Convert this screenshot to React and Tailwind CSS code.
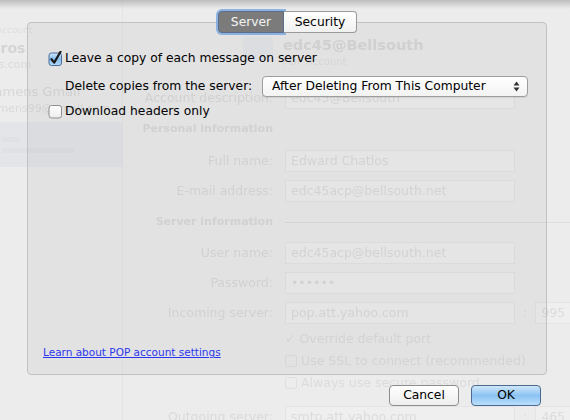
import React from "react";

const font = { fontFamily: '"DejaVu Sans", "Lucida Grande", sans-serif' };

const BgField = ({ value, width = "w-[230px]" }) => (
  <div className={`flex h-[22px] ${width} items-center border border-[#e4e4e4] bg-[#efefef] px-[5px] text-[12.5px] text-[#dcdcdc]`}>
    {value}
  </div>
);

const BgRow = ({ label, children }) => (
  <div className="flex h-[30px] items-center">
    <div className="w-[277px] pr-[4px] text-right text-[12.5px] text-[#dadada]">{label}</div>
    <div className="ml-[8px] flex items-center">{children}</div>
  </div>
);

const Checkbox = ({ checked }) =>
  checked ? (
    <svg width="15" height="15" viewBox="0 0 15 15">
      <defs>
        <linearGradient id="cb" x1="0" y1="0" x2="0" y2="1">
          <stop offset="0" stopColor="#cfe6fb" />
          <stop offset="0.5" stopColor="#86bdf0" />
          <stop offset="1" stopColor="#b7dcfb" />
        </linearGradient>
      </defs>
      <rect x="1" y="2" width="12.5" height="12.5" rx="2.5" fill="url(#cb)" stroke="#4a6f99" />
      <path d="M3.5 8.2 L6.2 11.6 L12.5 0.8" fill="none" stroke="#1b1b1b" strokeWidth="2.2" strokeLinecap="round" strokeLinejoin="round" />
    </svg>
  ) : (
    <svg width="15" height="15" viewBox="0 0 15 15">
      <defs>
        <linearGradient id="cbw" x1="0" y1="0" x2="0" y2="1">
          <stop offset="0" stopColor="#ffffff" />
          <stop offset="1" stopColor="#ececec" />
        </linearGradient>
      </defs>
      <rect x="1" y="1.5" width="12.5" height="12.5" rx="2.5" fill="url(#cbw)" stroke="#8f8f8f" />
    </svg>
  );

const BackgroundWindow = () => (
  <div className="flex h-[420px] w-[570px] overflow-hidden bg-[#ececec] blur-[0.7px]" style={font}>
    {/* sidebar */}
    <div className="flex w-[123px] shrink-0 flex-col overflow-hidden border-r border-[#e4e4e4] pt-[24px]">
      <div className="ml-[-4px] text-[9px] leading-[12px] text-[#dedede]">Account</div>
      <div className="ml-[-42px] mt-[3px] whitespace-nowrap text-[14px] font-bold leading-[18px] text-[#d4d4d4]">Jacobros</div>
      <div className="ml-[-42px] whitespace-nowrap text-[11px] leading-[16px] text-[#dadada]">jacobros.com</div>
      <div className="ml-[-22px] mt-[10px] whitespace-nowrap text-[13px] leading-[18px] text-[#d8d8d8]">Simmens Gmail</div>
      <div className="ml-[-22px] whitespace-nowrap text-[11px] leading-[16px] text-[#dadada]">simmens99@gmail.com</div>
      <div className="mt-[5px] flex h-[45px] flex-col justify-center gap-[6px] bg-[#e4e5e9] pl-[2px]">
        <div className="h-[5px] w-[18px] bg-[#e0e1e5]" />
        <div className="h-[5px] w-[72px] bg-[#e0e1e5]" />
      </div>
    </div>
    {/* account details */}
    <div className="relative flex-1">
      <div className="flex h-[83px] items-start pt-[35px] pl-[120px]">
        <div className="mr-[10px] mt-[2px] h-[24px] w-[30px] rounded-[3px] bg-[#e4e6eb]" />
        <div>
          <div className="text-[14.5px] font-bold leading-[20px] text-[#d8d8d8]">edc45@Bellsouth</div>
          <div className="text-[10px] leading-[14px] text-[#dfdfdf]">POP Account</div>
        </div>
      </div>
      <div className="ml-[-123px]">
        <BgRow label="Account description:">
          <BgField value="edc45@Bellsouth" />
        </BgRow>
        <BgRow label={<span className="text-[11px] font-bold">Personal information</span>} />
        <div className="h-[3px]" />
        <BgRow label="Full name:">
          <BgField value="Edward Chatlos" />
        </BgRow>
        <BgRow label="E-mail address:">
          <BgField value="edc45acp@bellsouth.net" />
        </BgRow>
        <div className="flex h-[32px] items-center">
          <div className="w-[277px] pr-[4px] text-right text-[11px] font-bold text-[#dadada]">Server information</div>
          <div className="ml-[8px] h-px flex-1 bg-[#dedede]" />
        </div>
        <BgRow label="User name:">
          <BgField value="edc45acp@bellsouth.net" />
        </BgRow>
        <BgRow label="Password:">
          <BgField value="••••••" />
        </BgRow>
        <BgRow label="Incoming server:">
          <BgField value="pop.att.yahoo.com" />
          <span className="ml-[8px] mr-[8px] text-[13px] text-[#dedede]">:</span>
          <BgField value="995" width="w-[40px]" />
        </BgRow>
        <div className="ml-[285px] flex h-[22px] items-center gap-[4px] text-[12.5px] text-[#dcdcdc]">
          <span>✓</span>Override default port
        </div>
        <div className="ml-[285px] flex h-[22px] items-center gap-[4px] text-[12.5px] text-[#dcdcdc]">
          <span className="h-[12px] w-[12px] rounded-[2px] border border-[#e0e0e0]" />Use SSL to connect (recommended)
        </div>
        <div className="ml-[285px] flex h-[22px] items-center gap-[4px] text-[12.5px] text-[#dcdcdc]">
          <span className="h-[12px] w-[12px] rounded-[2px] border border-[#e0e0e0]" />Always use secure password
        </div>
        <div className="h-[8px]" />
        <BgRow label="Outgoing server:">
          <BgField value="smtp.att.yahoo.com" />
          <span className="ml-[8px] mr-[8px] text-[13px] text-[#dedede]">:</span>
          <BgField value="465" width="w-[40px]" />
        </BgRow>
      </div>
      <div className="absolute right-[3px] top-0 h-full w-px bg-[#e0e0e0]" />
    </div>
  </div>
);

const Sheet = () => (
  <div className="absolute inset-0 flex flex-col" style={font}>
    <div className="h-[9px] bg-gradient-to-b from-[#bdbdbd] to-transparent" />
    <div className="relative ml-[27px] mt-[13px] h-[353px] w-[520px] rounded-[4px] border border-[#c2c2c2] bg-[rgba(120,120,120,0.08)]">
      {/* tabs */}
      <div className="absolute left-[190px] top-[-12px] flex h-[22px] text-[12.3px]">
        <div className="flex w-[66px] items-center justify-center rounded-l-[4px] border border-[#5b6f8c] bg-[#7b7b7b] text-[#f4f4f4] shadow-[0_0_0_2px_rgba(110,160,225,0.75)]">
          Server
        </div>
        <div className="flex w-[73px] items-center justify-center rounded-r-[4px] border border-l-0 border-[#9a9a9a] bg-gradient-to-b from-white to-[#f1f1f1] text-black">
          Security
        </div>
      </div>
      <div className="flex flex-col whitespace-nowrap pl-[20px] pt-[25px] text-[12.3px] text-black">
        <div className="flex h-[20px] items-center gap-[2px]">
          <Checkbox checked />
          <span>Leave a copy of each message on server</span>
        </div>
        <div className="mt-[7px] flex h-[22px] items-center pl-[17px]">
          <span className="w-[197px]">Delete copies from the server:</span>
          <div className="flex h-[21px] w-[266px] items-center justify-between rounded-[4px] border border-[#9d9d9d] bg-gradient-to-b from-white to-[#f3f3f3] pl-[9px] pr-[7px] shadow-[0_1px_0_rgba(0,0,0,0.08)]">
            <span>After Deleting From This Computer</span>
            <svg width="7" height="11" viewBox="0 0 7 11">
              <path d="M0.5 4.5 L3.5 0.5 L6.5 4.5Z M0.5 6.5 L3.5 10.5 L6.5 6.5Z" fill="#333" />
            </svg>
          </div>
        </div>
        <div className="mt-[4px] flex h-[20px] items-center gap-[2px]">
          <Checkbox />
          <span>Download headers only</span>
        </div>
      </div>
      <a href="#" className="absolute bottom-[13px] left-[15px] text-[10.5px] text-[#2a35f0] underline">
        Learn about POP account settings
      </a>
    </div>
    <div className="mr-[29px] mt-[10px] flex justify-end gap-[12px] text-[12.3px]">
      <button className="flex h-[21px] w-[70px] items-center justify-center rounded-[4px] border border-[#8d8d8d] bg-gradient-to-b from-white to-[#eeeeee] text-black">
        Cancel
      </button>
      <button className="flex h-[21px] w-[70px] items-center justify-center rounded-[4px] border border-[#4b6a91] bg-gradient-to-b from-[#cfe7fb] via-[#8cc3f2] to-[#b9defb] text-black">
        OK
      </button>
    </div>
  </div>
);

export default function App() {
  return (
    <div className="relative h-[420px] w-[570px] overflow-hidden">
      <BackgroundWindow />
      <Sheet />
    </div>
  );
}
